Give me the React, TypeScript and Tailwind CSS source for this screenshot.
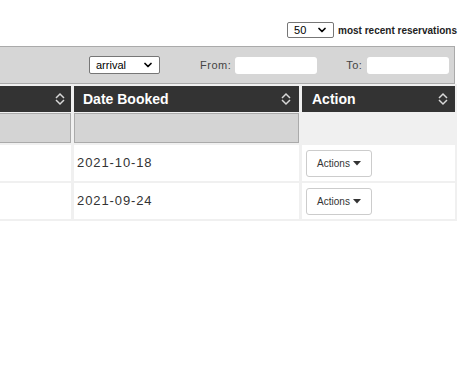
import { Fragment } from "react";
import { ChevronDown } from "lucide-react";

function SortIcon() {
  return (
    <svg width="10" height="14" viewBox="0 0 10 14" className="shrink-0">
      <polyline points="1,6 5,2 9,6" fill="none" stroke="#d8d8d8" strokeWidth="1.5" />
      <polyline points="1,8 5,12 9,8" fill="none" stroke="#d8d8d8" strokeWidth="1.5" />
    </svg>
  );
}

function FakeSelect({ value, width }: { value: string; width: string }) {
  return (
    <div
      className={`flex items-center justify-between rounded-[2px] border border-[#767676] bg-white pl-[6px] pr-[5px] text-[11px] text-black ${width}`}
    >
      <span>{value}</span>
      <ChevronDown size={12} strokeWidth={3.5} className="text-black" />
    </div>
  );
}

function ActionsButton() {
  return (
    <div className="flex h-[27px] w-[66px] items-center justify-center gap-[3px] rounded-[3px] border border-[#cccccc] bg-white text-[10px] text-[#333]">
      <span>Actions</span>
      <svg width="8" height="5" viewBox="0 0 8 5">
        <polygon points="0,0 8,0 4,4.5" fill="#333" />
      </svg>
    </div>
  );
}

const rows = ["2021-10-18", "2021-09-24"];

export default function App() {
  return (
    <div className="h-[369px] w-[465px] overflow-hidden bg-white pt-[22px] font-['Liberation_Sans',Arial,sans-serif]">
      {/* page size */}
      <div className="flex h-[16px] items-center justify-end gap-[4px] pr-[8px]">
        <FakeSelect value="50" width="h-[16px] w-[47px]" />
        <span className="text-[10px] font-bold text-[#222]">most recent reservations</span>
      </div>

      {/* filter bar */}
      <div className="mt-[8px] flex h-[38px] w-[455px] items-center border border-l-0 border-[#aaaaaa] bg-[#d6d6d6]">
        <div className="ml-[89px]">
          <FakeSelect value="arrival" width="h-[18px] w-[71px]" />
        </div>
        <span className="ml-[40px] text-[11px] tracking-[0.5px] text-[#444]">From:</span>
        <div className="ml-[4px] h-[17px] w-[82px] rounded-[3px] bg-white" />
        <span className="ml-[29px] text-[11px] tracking-[0.5px] text-[#444]">To:</span>
        <div className="ml-[5px] h-[17px] w-[82px] rounded-[3px] bg-white" />
      </div>

      {/* table */}
      <div className="grid w-[457px] grid-cols-[71px_225px_153px] gap-x-[3px] gap-y-[2px] bg-[#f0f0f0] pb-[2px] pt-[2px]">
        <div className="flex h-[26px] items-center justify-end bg-[#333333] pr-[6px]">
          <SortIcon />
        </div>
        <div className="flex h-[26px] items-center justify-between bg-[#333333] pl-[9px] pr-[8px]">
          <span className="text-[14px] font-bold text-white">Date Booked</span>
          <SortIcon />
        </div>
        <div className="flex h-[26px] items-center justify-between bg-[#333333] pl-[10px] pr-[7px]">
          <span className="text-[14px] font-bold text-white">Action</span>
          <SortIcon />
        </div>

        <div className="-mt-px h-[30px] border border-l-0 border-[#aaaaaa] bg-[#d4d4d4]" />
        <div className="-mt-px h-[30px] border border-[#aaaaaa] bg-[#d4d4d4]" />
        <div className="-mt-px h-[30px]" />

        {rows.map((d) => (
          <Fragment key={d}>
            <div className="h-[36px] bg-white" />
            <div className="flex h-[36px] items-center bg-white pl-[3px] text-[13px] tracking-[0.9px] text-[#333]">
              {d}
            </div>
            <div className="flex h-[36px] items-center bg-white pl-[4px]">
              <ActionsButton />
            </div>
          </Fragment>
        ))}
      </div>
    </div>
  );
}
